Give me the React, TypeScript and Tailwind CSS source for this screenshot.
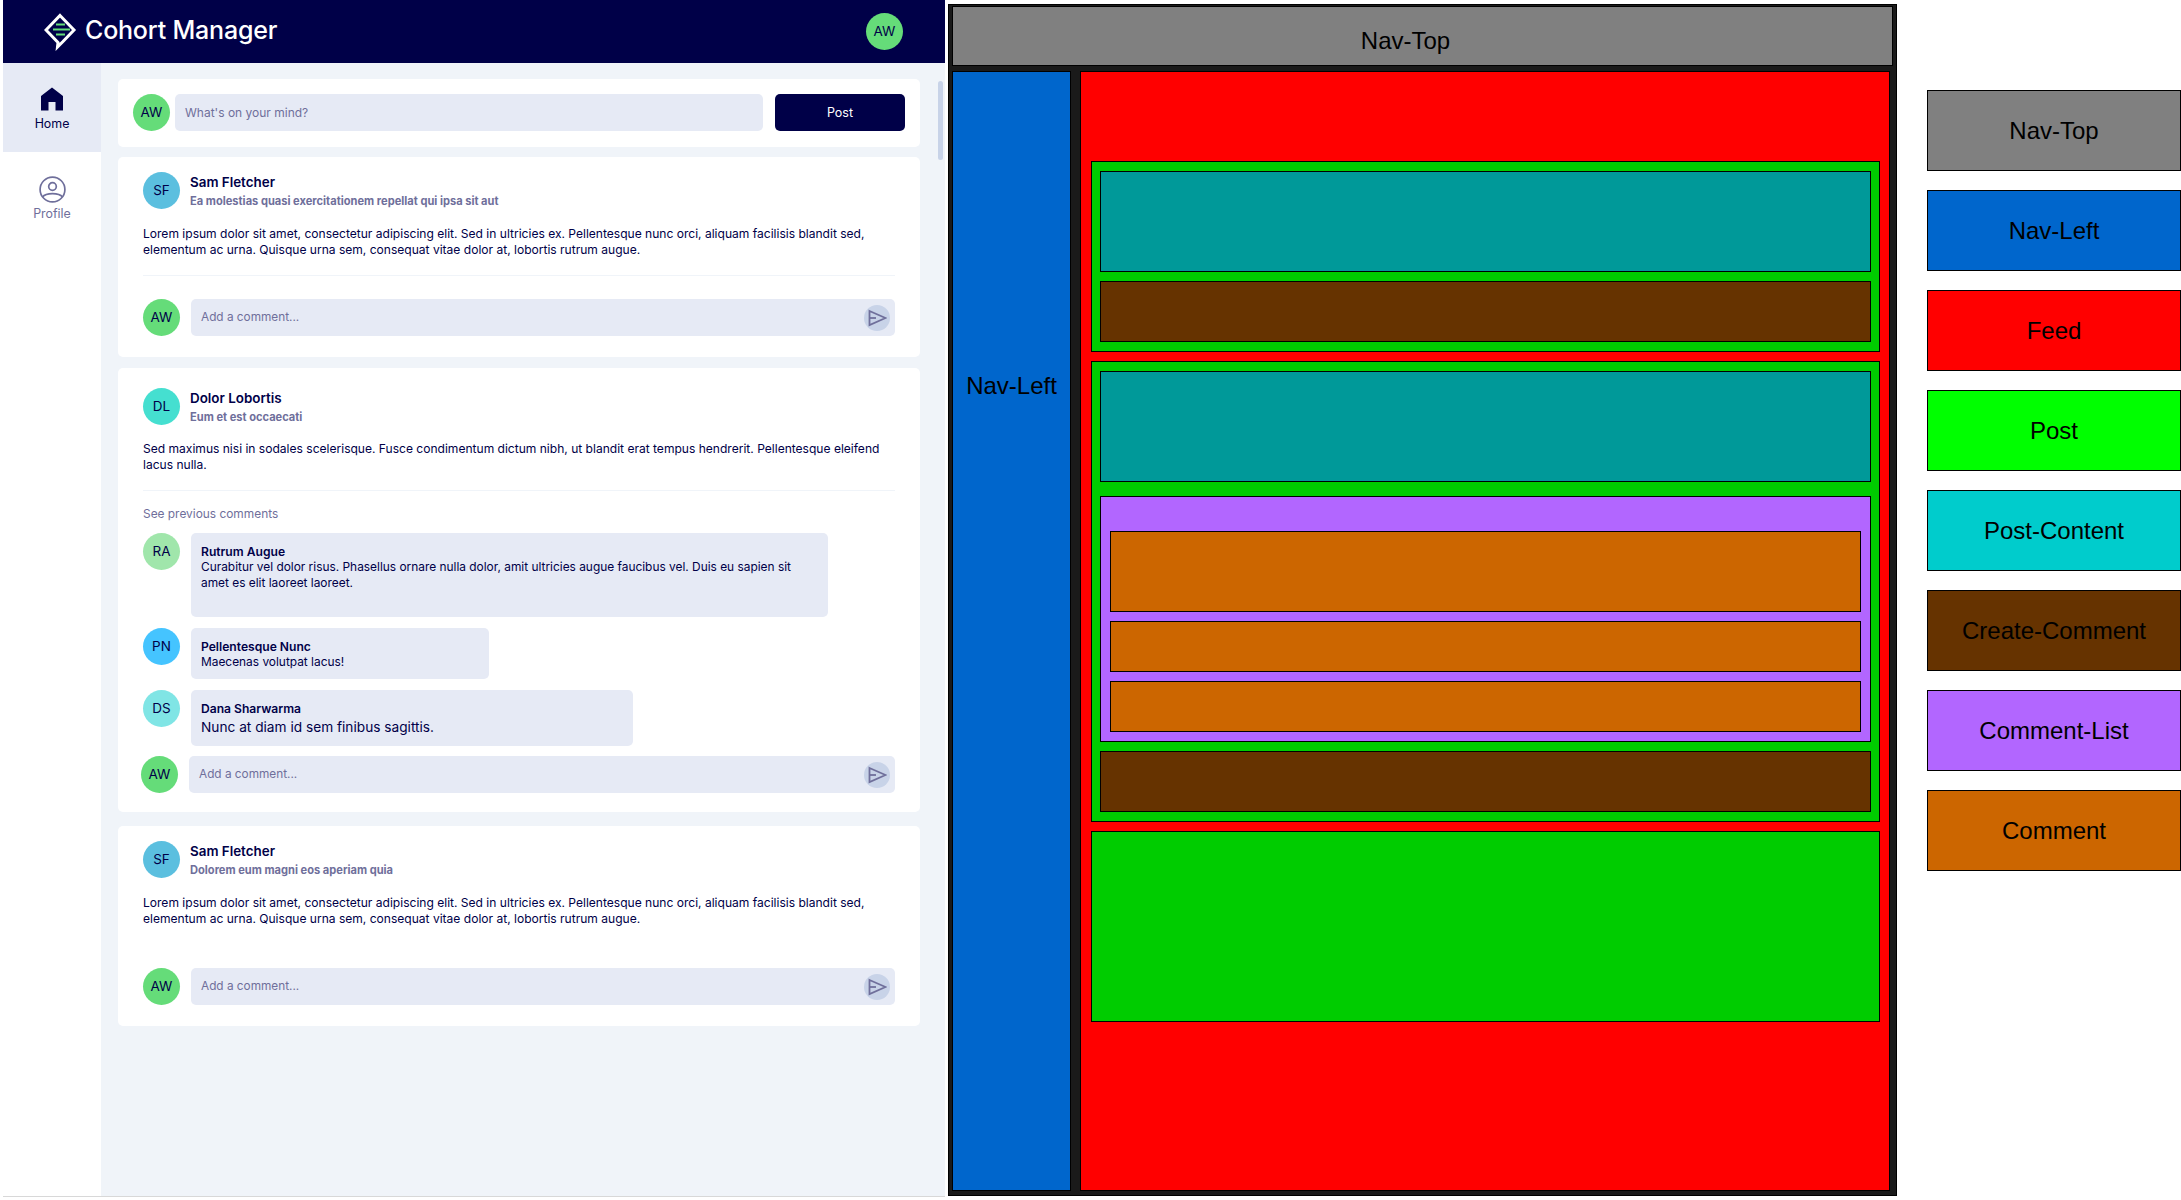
import type { ReactNode } from 'react';

const LOREM =
  'Lorem ipsum dolor sit amet, consectetur adipiscing elit. Sed in ultricies ex. Pellentesque nunc orci, aliquam facilisis blandit sed, elementum ac urna. Quisque urna sem, consequat vitae dolor at, lobortis rutrum augue.';

function Avatar({ text, color }: { text: string; color: string }) {
  return (
    <div className={`flex h-[37px] w-[37px] shrink-0 items-center justify-center rounded-full text-[13.5px] text-[#000048] ${color}`}>
      {text}
    </div>
  );
}

function CommentInput() {
  return (
    <div className="flex h-[37px] flex-1 items-center justify-between rounded-[5px] bg-[#e6eaf5] pl-[10px] pr-[5px]">
      <span className="pt-[1px] text-[11.8px] text-[#6f6f9b]">Add a comment...</span>
      <div className="flex h-[26px] w-[26px] items-center justify-center rounded-full bg-[#c8d3e8]">
        <svg width="20" height="18" viewBox="0 0 20 18" fill="none" stroke="#6f6f9b" strokeWidth="1.8">
          <path d="M2.5 2 L18.5 9 L2.5 16 Z" />
          <path d="M2.5 9 H9" />
        </svg>
      </div>
    </div>
  );
}

function PostHead({ name, sub, color, initials }: { name: string; sub: string; color: string; initials: string }) {
  return (
    <div className="flex gap-[10px]">
      <Avatar text={initials} color={color} />
      <div className="pt-[1px]">
        <div className="text-[13.4px] leading-[18px] font-semibold text-[#000048]">{name}</div>
        <div className="mt-[2px] text-[11.1px] leading-[16px] font-bold text-[#6f6f9b]">{sub}</div>
      </div>
    </div>
  );
}

function Card({ children, className }: { children: ReactNode; className: string }) {
  return <div className={`rounded-[5px] bg-white ${className}`}>{children}</div>;
}

function SimplePost({ sub, divider, mt }: { sub: string; divider: boolean; mt: string }) {
  return (
    <Card className={`${mt} h-[200px] px-[25px] pt-[15px]`}>
      <PostHead name="Sam Fletcher" sub={sub} color="bg-[#5bbfdf]" initials="SF" />
      <p className="mt-[17px] h-[32px] text-[12.05px] leading-[16px] text-[#000048]">{LOREM}</p>
      <div className={`mt-[17px] h-px ${divider ? 'bg-[#f0f4f9]' : ''}`} />
      <div className="mt-[23px] flex gap-[11px]">
        <Avatar text="AW" color="bg-[#65dc79]" />
        <CommentInput />
      </div>
    </Card>
  );
}

function Bubble({ initials, color, name, width, height, mt, big, children }: {
  initials: string; color: string; name: string; width: string; height: string; mt: string; big?: boolean; children: ReactNode;
}) {
  return (
    <div className={`flex gap-[11px] ${mt}`}>
      <Avatar text={initials} color={color} />
      <div className={`rounded-[5px] bg-[#e6eaf5] px-[10px] pt-[11px] text-[#000048] ${width} ${height}`}>
        <div className="text-[12.1px] leading-[15px] font-semibold">{name}</div>
        <div className={big ? 'mt-[2px] text-[13.7px] leading-[18px]' : 'text-[11.9px] leading-[16px]'}>{children}</div>
      </div>
    </div>
  );
}

function CohortApp() {
  return (
    <div className="flex h-[1197px] w-[942px] shrink-0 flex-col border-b border-[#d8d8d8]">
      <header className="flex h-[63px] shrink-0 items-center justify-between bg-[#000048] pl-[41px] pr-[42px]">
        <div className="flex items-center gap-[7px]">
          <svg width="34" height="38" viewBox="0 0 34 38" fill="none">
            <path d="M16 2.5 L30 17 L19 28.5 L13.5 34 L14 29.5 L2 17 Z" stroke="#fff" strokeWidth="3" strokeLinejoin="miter" />
            <path d="M12 11.5 H21 M9 16.5 H26 M12 21.5 H21" stroke="#65dc79" strokeWidth="2.2" />
          </svg>
          <span className="pb-[2px] text-[25px] leading-none font-medium tracking-[-0.2px] text-white">Cohort Manager</span>
        </div>
        <Avatar text="AW" color="bg-[#65dc79]" />
      </header>
      <div className="flex min-h-0 flex-1">
        <nav className="w-[98px] shrink-0 bg-white text-[12.4px]">
          <div className="flex h-[89px] flex-col items-center bg-[#e6eaf5] pt-[24px] text-[#000048]">
            <svg width="22" height="24" viewBox="0 0 22 24" fill="#000048">
              <path d="M11 0.5 L22 9 V23.5 H14.5 V15 H7.5 V23.5 H0 V9 Z" />
            </svg>
            <span className="mt-[5px] leading-[16px]">Home</span>
          </div>
          <div className="flex flex-col items-center pt-[24px] text-[#6f6f9b]">
            <svg width="27" height="27" viewBox="0 0 27 27" fill="none" stroke="#6f6f9b" strokeWidth="1.7">
              <circle cx="13.5" cy="13.5" r="12.4" />
              <circle cx="13.5" cy="10.5" r="3.8" />
              <path d="M3.5 21 C7 16.5 20 16.5 23.5 21" />
            </svg>
            <span className="mt-[3px] leading-[16px]">Profile</span>
          </div>
        </nav>
        <main className="relative min-w-0 flex-1 bg-[#f0f4f9] pl-[17px] pr-[25px] pt-[16px]">
          <div className="absolute right-[2px] top-[18px] h-[79px] w-[5px] rounded-[3px] bg-[#c8d3e8]" />
          <Card className="flex h-[68px] gap-[5px] px-[15px] pt-[15px]">
            <Avatar text="AW" color="bg-[#65dc79]" />
            <div className="flex h-[37px] flex-1 items-center rounded-[5px] bg-[#e6eaf5] pl-[10px] pt-[1px] text-[12px] text-[#6f6f9b]">
              What's on your mind?
            </div>
            <button className="ml-[7px] h-[37px] w-[130px] rounded-[5px] bg-[#000048] pt-[1px] text-[12.5px] text-white">Post</button>
          </Card>
          <SimplePost mt="mt-[10px]" divider sub="Ea molestias quasi exercitationem repellat qui ipsa sit aut" />
          <Card className="mt-[11px] h-[444px] px-[25px] pt-[20px]">
            <PostHead name="Dolor Lobortis" sub="Eum et est occaecati" color="bg-[#45dfd0]" initials="DL" />
            <p className="mt-[16px] h-[32px] text-[12.05px] leading-[16px] text-[#000048]">
              Sed maximus nisi in sodales scelerisque. Fusce condimentum dictum nibh, ut blandit erat tempus hendrerit. Pellentesque eleifend lacus nulla.
            </p>
            <div className="mt-[17px] h-px bg-[#f0f4f9]" />
            <div className="mt-[15px] text-[11.9px] leading-[16px] text-[#6f6f9b]">See previous comments</div>
            <Bubble mt="mt-[11px]" initials="RA" color="bg-[#a0e6ab]" name="Rutrum Augue" width="w-[637px]" height="h-[84px]">
              Curabitur vel dolor risus. Phasellus ornare nulla dolor, amit ultricies augue faucibus vel. Duis eu sapien sit amet es elit laoreet laoreet.
            </Bubble>
            <Bubble mt="mt-[11px]" initials="PN" color="bg-[#45c4ff]" name="Pellentesque Nunc" width="w-[298px]" height="h-[51px]">
              Maecenas volutpat lacus!
            </Bubble>
            <Bubble mt="mt-[11px]" big initials="DS" color="bg-[#80e5e5]" name="Dana Sharwarma" width="w-[442px]" height="h-[56px]">
              Nunc at diam id sem finibus sagittis.
            </Bubble>
            <div className="ml-[-2px] mt-[10px] flex gap-[11px]">
              <Avatar text="AW" color="bg-[#65dc79]" />
              <CommentInput />
            </div>
          </Card>
          <SimplePost mt="mt-[14px]" divider={false} sub="Dolorem eum magni eos aperiam quia" />
        </main>
      </div>
    </div>
  );
}

const box = 'border border-black';

function PostDiagram({ children, className }: { children: ReactNode; className: string }) {
  return <div className={`${box} flex flex-col bg-[#00cc00] px-[8px] pt-[9px] ${className}`}>{children}</div>;
}

function Diagram() {
  return (
    <div className="mt-[4px] flex h-[1192px] w-[949px] shrink-0 flex-col border border-black bg-[#1a1a1a] px-[3px] py-[1px] text-[24px]">
      <div className={`${box} flex h-[60px] shrink-0 justify-center bg-[#808080] pr-[34px] pt-[18px] leading-[32px] text-black`}>Nav-Top</div>
      <div className="mt-[5px] flex min-h-0 flex-1 gap-[9px] pb-[3px]">
        <div className={`${box} w-[119px] shrink-0 bg-[#0066cc] pt-[298px] text-center leading-[32px] text-black`}>Nav-Left</div>
        <div className={`${box} mr-[3px] flex-1 bg-[#ff0000] pl-[10px] pr-[9px] pt-[89px]`}>
          <PostDiagram className="h-[191px]">
            <div className={`${box} h-[101px] bg-[#009999]`} />
            <div className={`${box} mt-[9px] h-[61px] bg-[#663300]`} />
          </PostDiagram>
          <PostDiagram className="mt-[9px] h-[461px]">
            <div className={`${box} h-[111px] bg-[#009999]`} />
            <div className={`${box} mt-[14px] h-[246px] bg-[#b266ff] px-[9px] pt-[34px]`}>
              <div className={`${box} h-[81px] bg-[#cc6600]`} />
              <div className={`${box} mt-[9px] h-[51px] bg-[#cc6600]`} />
              <div className={`${box} mt-[9px] h-[51px] bg-[#cc6600]`} />
            </div>
            <div className={`${box} mt-[9px] h-[61px] bg-[#663300]`} />
          </PostDiagram>
          <PostDiagram className="mt-[9px] h-[191px]">{null}</PostDiagram>
        </div>
      </div>
    </div>
  );
}

const LEGEND = [
  { label: 'Nav-Top', color: 'bg-[#808080]' },
  { label: 'Nav-Left', color: 'bg-[#0066cc]' },
  { label: 'Feed', color: 'bg-[#ff0000]' },
  { label: 'Post', color: 'bg-[#00ff00]' },
  { label: 'Post-Content', color: 'bg-[#00cccc]' },
  { label: 'Create-Comment', color: 'bg-[#663300]' },
  { label: 'Comment-List', color: 'bg-[#b266ff]' },
  { label: 'Comment', color: 'bg-[#cc6600]' },
];

export default function App() {
  return (
    <div className="flex h-[1200px] w-[2181px] overflow-hidden bg-white pl-[3px] font-['Inter',sans-serif]">
      <CohortApp />
      <div className="ml-[3px] font-['Liberation_Sans',sans-serif]">
        <Diagram />
      </div>
      <div className="ml-[30px] mt-[90px] flex w-[254px] shrink-0 flex-col gap-[19px] font-['Liberation_Sans',sans-serif]">
        {LEGEND.map((item) => (
          <div key={item.label} className={`flex h-[81px] items-center justify-center border border-black pt-[1px] text-[24px] text-black ${item.color}`}>
            {item.label}
          </div>
        ))}
      </div>
    </div>
  );
}
